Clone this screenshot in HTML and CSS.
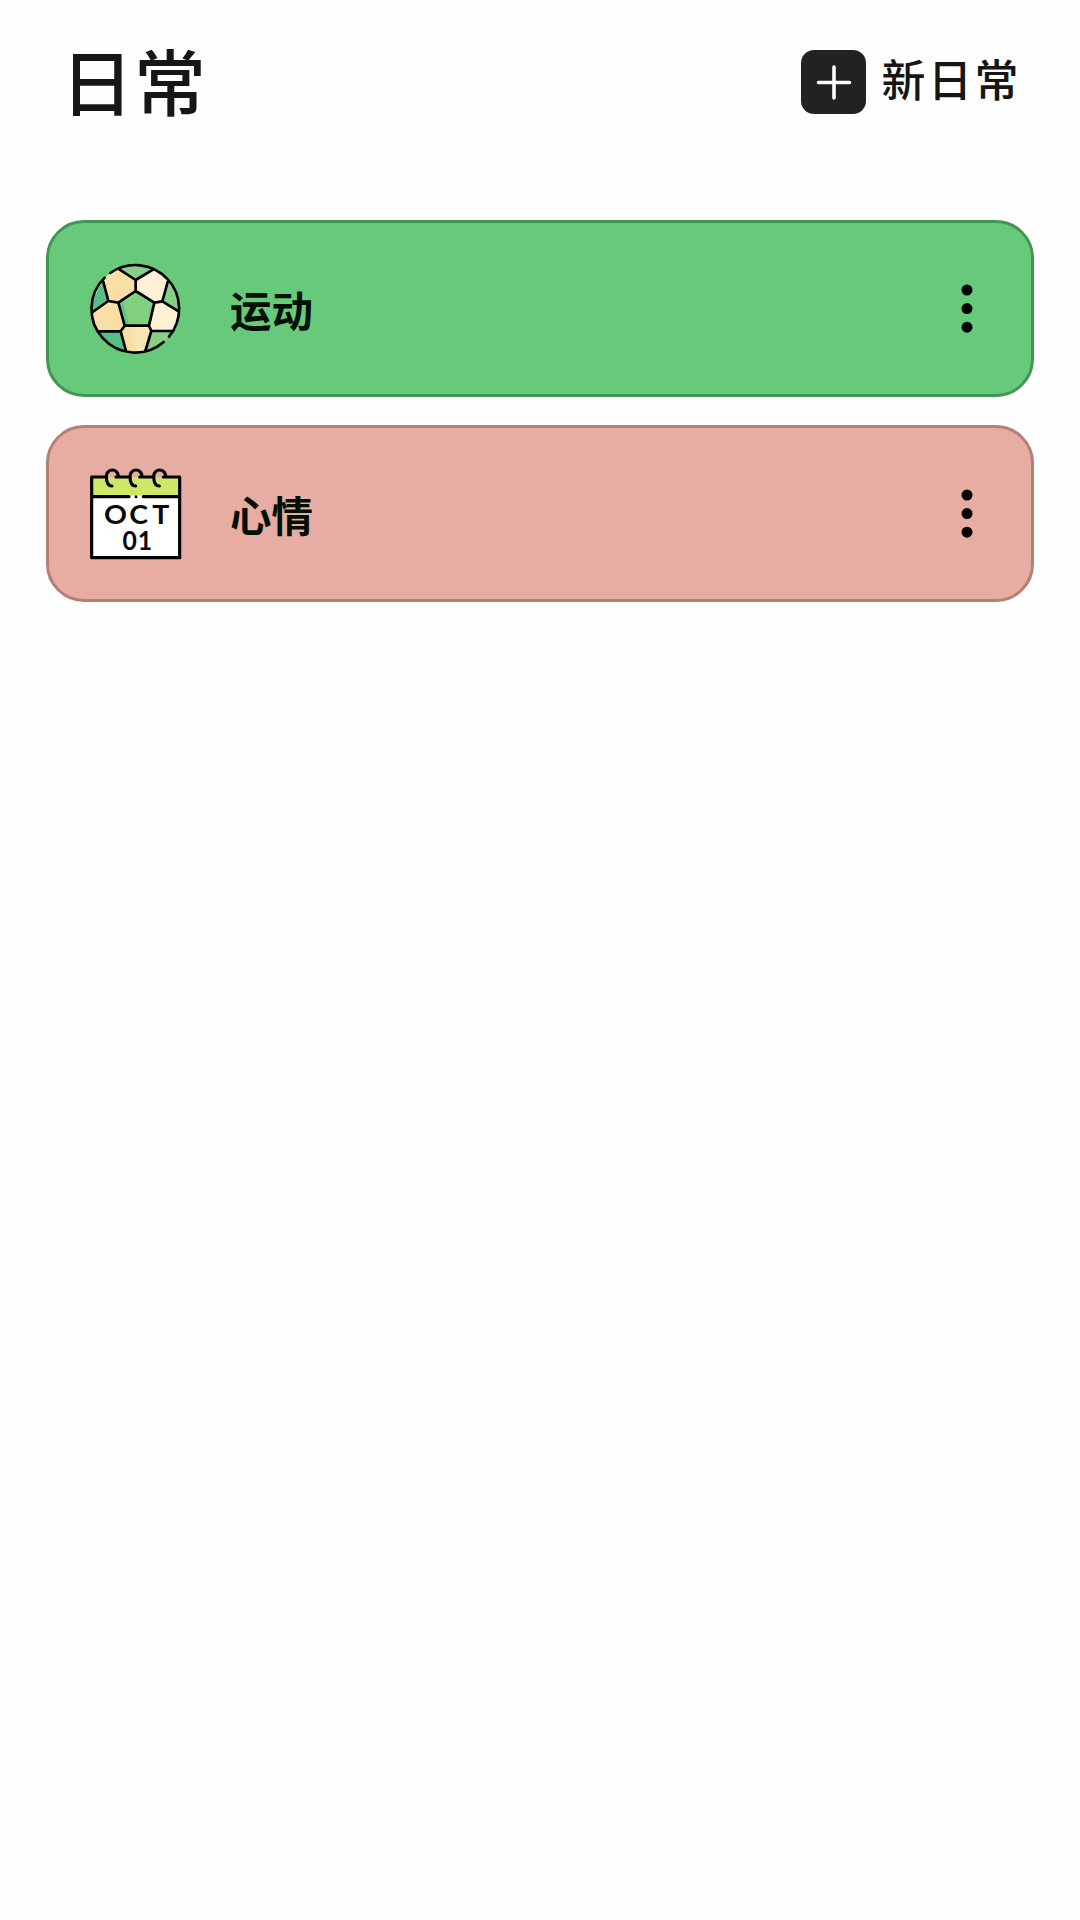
FILE: index.html
```html
<!DOCTYPE html>
<html lang="zh-CN">
<head>
<meta charset="utf-8">
<title>日常</title>
<link rel="stylesheet" href="styles.css">
</head>
<body>
<header class="header">
  <h1 class="title">日常</h1>
  <button class="add">
    <svg class="add-icon" viewBox="0 0 65 64"><rect width="65" height="64" rx="13" fill="#222"/><path d="M17.500 32.500H48.500M33 17V48" stroke="#fff" stroke-width="3.600" stroke-linecap="round"/></svg>
    <span class="add-label">新日常</span>
  </button>
</header>
<main class="list">
  <section class="card card-green">
    <svg class="card-icon" viewBox="30 38 273 273">
      <circle cx="166" cy="175" r="130" fill="#fff0d6"/>
      <path d="M76 84L119 55L167 89V122L115 157L85 152ZM38 185L93 155L115 157L134 226L122 243H55Q42 220 38 185ZM134 226H167V304L138 302L122 243Z" fill="#f9dfa6"/>
      <path d="M167 228H210L214 242L196 302L167 305Z" fill="#fbe4b4"/>
      <path d="M167 122L223 157L207 226H134L115 157Z" fill="#80d080"/>
      <path d="M115 157L128 149L148 226H134Z" fill="#64c684"/>
      <path d="M119 55Q167 32 219 58L167 89ZM263 95Q294 130 297 184L247 153ZM214 242H279Q250 290 196 302Z" fill="#86d083"/>
      <path d="M70 92L85 152L38 185Q36 135 70 92ZM55 243H122L138 302Q84 294 55 243Z" fill="#56bf86"/>
      <g fill="none" stroke="#000" stroke-width="8" stroke-linecap="round" stroke-linejoin="round">
        <path d="M91 68A131 131 0 0 1 267 259M251 275A131 131 0 0 1 74 82"/>
        <path d="M167 122L223 157L207 226H134L115 157ZM119 58L167 89L219 58M167 89V122M70 94L85 152L38 185M85 152L115 157M263 95L247 153L297 184M247 153L223 157M55 243H122L134 226M122 243L138 302M207 226L214 242H279M214 242L196 302"/>
      </g>
    </svg>
    <span class="card-name">运动</span>
    <svg class="more" viewBox="0 0 12 50"><circle cx="6" cy="6" r="5.500"/><circle cx="6" cy="24.600" r="5.500"/><circle cx="6" cy="43.200" r="5.500"/></svg>
  </section>
  <section class="card card-pink">
    <svg class="card-icon" viewBox="30 38 273 273">
      <path d="M35 65H299V307H35Z" fill="#fff"/>
      <path d="M35 65H299V124H35Z" fill="#cce866"/>
      <path d="M150 121H187V128H150Z" fill="#fff"/>
      <g fill="none" stroke="#000" stroke-width="9.500" stroke-linecap="round" stroke-linejoin="round">
        <path d="M108 65H150M179 65H221M250 65H299V307H35V65H80M35 124H147M190 124H299"/>
        <path d="M115 62A18 18 0 0 0 79 62C79 78 83 92 96 92M186 62A18 18 0 0 0 150 62C150 78 154 92 167 92M257 62A18 18 0 0 0 221 62C221 78 225 92 238 92"/>
      </g>
      <circle cx="168" cy="124" r="4.500"/>
      <text class="date" transform="translate(0 206) scale(1.080 1)" x="67 137 201">OCT</text>
      <text class="date" transform="translate(0 284) scale(.940 1)" x="136 184">01</text>
    </svg>
    <span class="card-name">心情</span>
    <svg class="more" viewBox="0 0 12 50"><circle cx="6" cy="6" r="5.500"/><circle cx="6" cy="24.600" r="5.500"/><circle cx="6" cy="43.200" r="5.500"/></svg>
  </section>
</main>
</body>
</html>
```
FILE: styles.css
```css
* { box-sizing: border-box; }

body {
  margin: 0;
  min-height: 1920px;
  background: #fefefe;
  color: #161616;
  font-family: "Noto Sans CJK SC", sans-serif;
}

.header {
  display: flex;
  align-items: center;
  justify-content: space-between;
  height: 164px;
  padding: 0 59px 0 61px;
}

.title {
  margin: 0;
  padding-bottom: 7px;
  font-size: 72px;
  font-weight: 500;
  letter-spacing: 1px;
  line-height: 100px;
}

.add {
  display: flex;
  align-items: center;
  gap: 16px;
  padding: 0;
  border: 0;
  background: none;
  color: inherit;
  font-family: inherit;
}

.add-icon {
  width: 65px;
  height: 64px;
}

.add-label {
  padding-bottom: 8px;
  font-size: 44px;
  font-weight: 500;
  letter-spacing: 2.500px;
  line-height: 56px;
}

.list {
  display: flex;
  flex-direction: column;
  gap: 28px;
  padding: 56px 46px 0;
}

.card {
  display: flex;
  align-items: center;
  height: 177px;
  padding: 0 58px 0 41px;
  border: 3px solid;
  border-radius: 38px;
}

.card-green {
  background: #67ca7b;
  border-color: #419653;
}

.card-pink {
  background: #e7ada3;
  border-color: #b47f78;
}

.card-icon {
  width: 91px;
  height: 91px;
  overflow: visible;
}

.card-name {
  margin-left: 49px;
  color: #041005;
  font-size: 41.500px;
  font-weight: 700;
  line-height: 60px;
}

.more {
  width: 12px;
  height: 50px;
  margin-left: auto;
}

.date {
  font-family: Lato, sans-serif;
  font-size: 79px;
  font-weight: 700;
  fill: #0a0a0a;
}
```
